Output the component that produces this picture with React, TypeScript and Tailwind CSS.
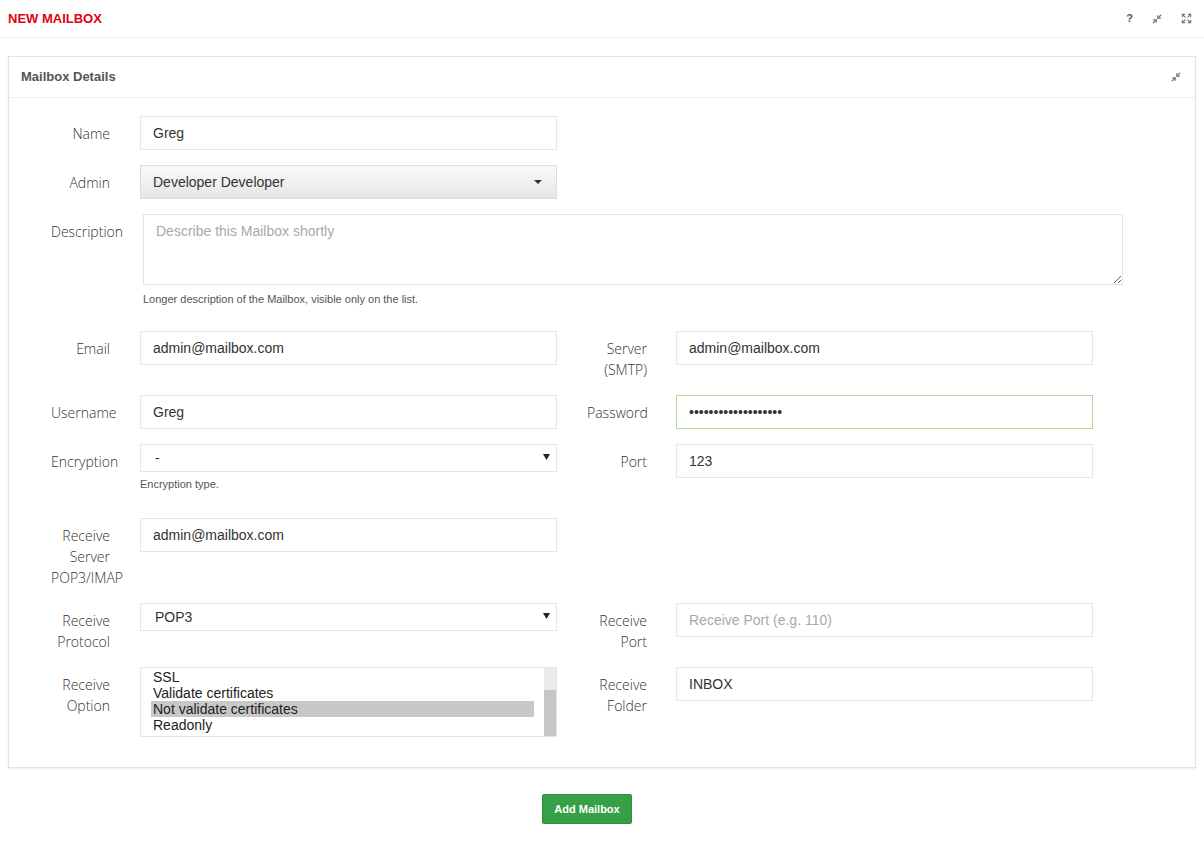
import React from "react";
import { Minimize2, Expand } from "lucide-react";

const labelCls =
  "text-right pt-[7px] leading-[21px] text-[14px] font-light text-[#333] font-['Open_Sans','Noto_Sans',sans-serif] shrink-0";

const inputCls =
  "w-full h-[34px] border border-[#e5e5e5] bg-white px-[12px] text-[14px] text-[#333] outline-none font-['Liberation_Sans',Arial,sans-serif] placeholder:text-[#a9a9a9]";

function LeftLabel({ children }: { children: React.ReactNode }) {
  return <div className={`w-[59px] ${labelCls}`}>{children}</div>;
}
function RightLabel({ children }: { children: React.ReactNode }) {
  return <div className={`w-[60px] ${labelCls}`}>{children}</div>;
}

function Left({ label, children }: { label: React.ReactNode; children: React.ReactNode }) {
  return (
    <div className="flex items-start w-[536px] shrink-0">
      <LeftLabel>{label}</LeftLabel>
      <div className="ml-[30px] w-[417px]">{children}</div>
    </div>
  );
}

function Right({ label, children }: { label: React.ReactNode; children: React.ReactNode }) {
  return (
    <div className="flex items-start shrink-0">
      <RightLabel>{label}</RightLabel>
      <div className="ml-[29px] w-[417px]">{children}</div>
    </div>
  );
}

function NativeSelect({ value }: { value: string }) {
  return (
    <div className="h-[28px] border border-[#e5e5e5] bg-white flex items-center justify-between pl-[14px] pr-[6px] text-[14px] text-[#333]">
      <span>{value}</span>
      <svg width="7" height="6" viewBox="0 0 7 6" className="-mt-[2px]">
        <polygon points="0,0 7,0 3.5,6" fill="#222" />
      </svg>
    </div>
  );
}

function Help({ children, mt, mb }: { children: React.ReactNode; mt: string; mb: string }) {
  return (
    <div className={`${mt} ${mb} leading-[18px] text-[11px] text-[#555]`}>{children}</div>
  );
}

export default function App() {
  return (
    <div className="min-h-[847px] bg-white font-['Liberation_Sans',Arial,sans-serif] text-[#333]">
      <div className="h-[38px] border-b border-[#eeeeee] flex items-center justify-between pl-2 pr-[12px]">
        <span className="text-[13px] font-bold text-[#e3000f]">NEW MAILBOX</span>
        <div className="flex items-center gap-[19px] text-[#666]">
          <span className="text-[11px] font-bold text-[#555] leading-none">?</span>
          <Minimize2 size={10} strokeWidth={3} color="#777" />
          <Expand size={11} strokeWidth={2.5} color="#777" />
        </div>
      </div>

      <div className="mx-2 mt-[18px] border border-[#e3e3e3] bg-white shadow-[0_1px_2px_rgba(0,0,0,0.07)]">
        <div className="h-[41px] border-b border-[#eeeeee] flex items-center justify-between pl-[12px] pr-[14px]">
          <span className="text-[13px] font-bold text-[#555]">Mailbox Details</span>
          <Minimize2 size={10} strokeWidth={3} color="#777" />
        </div>

        <div className="pt-[18px] pb-[30px] pl-[42px] flex flex-col gap-[15px]">
          <div className="flex items-start">
            <Left label="Name">
              <input readOnly value="Greg" className={inputCls} />
            </Left>
          </div>

          <div className="flex items-start">
            <Left label="Admin">
              <div className="h-[34px] border border-[#dddddd] bg-gradient-to-b from-[#fafafa] to-[#e6e6e6] flex items-center justify-between pl-[12px] pr-[14px] text-[14px] text-[#333]">
                <span>Developer Developer</span>
                <span className="w-0 h-0 border-x-[4px] border-x-transparent border-t-[4px] border-t-[#333]" />
              </div>
            </Left>
          </div>

          <div className="flex items-start">
            <LeftLabel>Description</LeftLabel>
            <div className="ml-[33px] w-[980px]">
              <textarea
                readOnly
                placeholder="Describe this Mailbox shortly"
                className="block w-full h-[71px] border border-[#e5e5e5] px-[12px] py-[6px] text-[14px] leading-[20px] outline-none placeholder:text-[#a9a9a9] font-['Liberation_Sans',Arial,sans-serif]"
              />
              <Help mt="mt-[5px]" mb="mb-[8px]">
                Longer description of the Mailbox, visible only on the list.
              </Help>
            </div>
          </div>

          <div className="flex items-start">
            <Left label="Email">
              <input readOnly value="admin@mailbox.com" className={inputCls} />
            </Left>
            <Right label="Server (SMTP)">
              <input readOnly value="admin@mailbox.com" className={inputCls} />
            </Right>
          </div>

          <div className="flex items-start">
            <Left label="Username">
              <input readOnly value="Greg" className={inputCls} />
            </Left>
            <Right label="Password">
              <input
                readOnly
                type="password"
                value="1234567890123456789"
                className="w-full h-[34px] border border-[#b1d99e] bg-white px-[12px] text-[14px] text-[#333] outline-none"
              />
            </Right>
          </div>

          <div className="flex items-start">
            <Left label="Encryption">
              <NativeSelect value="-" />
              <Help mt="mt-[3px]" mb="mb-[10px]">Encryption type.</Help>
            </Left>
            <Right label="Port">
              <input readOnly value="123" className={inputCls} />
            </Right>
          </div>

          <div className="flex items-start">
            <Left
              label={
                <>
                  Receive Server <span className="whitespace-nowrap">POP3/IMAP</span>
                </>
              }
            >
              <input readOnly value="admin@mailbox.com" className={inputCls} />
            </Left>
          </div>

          <div className="flex items-start">
            <Left label="Receive Protocol">
              <NativeSelect value="POP3" />
            </Left>
            <Right label="Receive Port">
              <input readOnly placeholder="Receive Port (e.g. 110)" className={inputCls} />
            </Right>
          </div>

          <div className="flex items-start">
            <Left label="Receive Option">
              <div className="h-[70px] border border-[#e5e5e5] bg-white flex text-[14px] text-[#222]">
                <div className="flex-1 pl-[10px] pr-[10px] pt-[1px] overflow-hidden">
                  <div className="h-[16px] leading-[16px] pl-[2px]">SSL</div>
                  <div className="h-[16px] leading-[16px] pl-[2px]">Validate certificates</div>
                  <div className="h-[16px] leading-[16px] pl-[2px] bg-[#c8c8c8]">Not validate certificates</div>
                  <div className="h-[16px] leading-[16px] pl-[2px]">Readonly</div>
                </div>
                <div className="w-[12px] bg-[#ebebeb] flex flex-col justify-end">
                  <div className="h-[46px] bg-[#c6c6c6]" />
                </div>
              </div>
            </Left>
            <Right label="Receive Folder">
              <input readOnly value="INBOX" className={inputCls} />
            </Right>
          </div>
        </div>
      </div>

      <div className="flex justify-center pr-[30px] mt-[26px]">
        <button className="h-[30px] w-[90px] bg-[#35a046] border border-[#2f8f3d] rounded-[2px] text-white text-[11px] font-bold">
          Add Mailbox
        </button>
      </div>
    </div>
  );
}
